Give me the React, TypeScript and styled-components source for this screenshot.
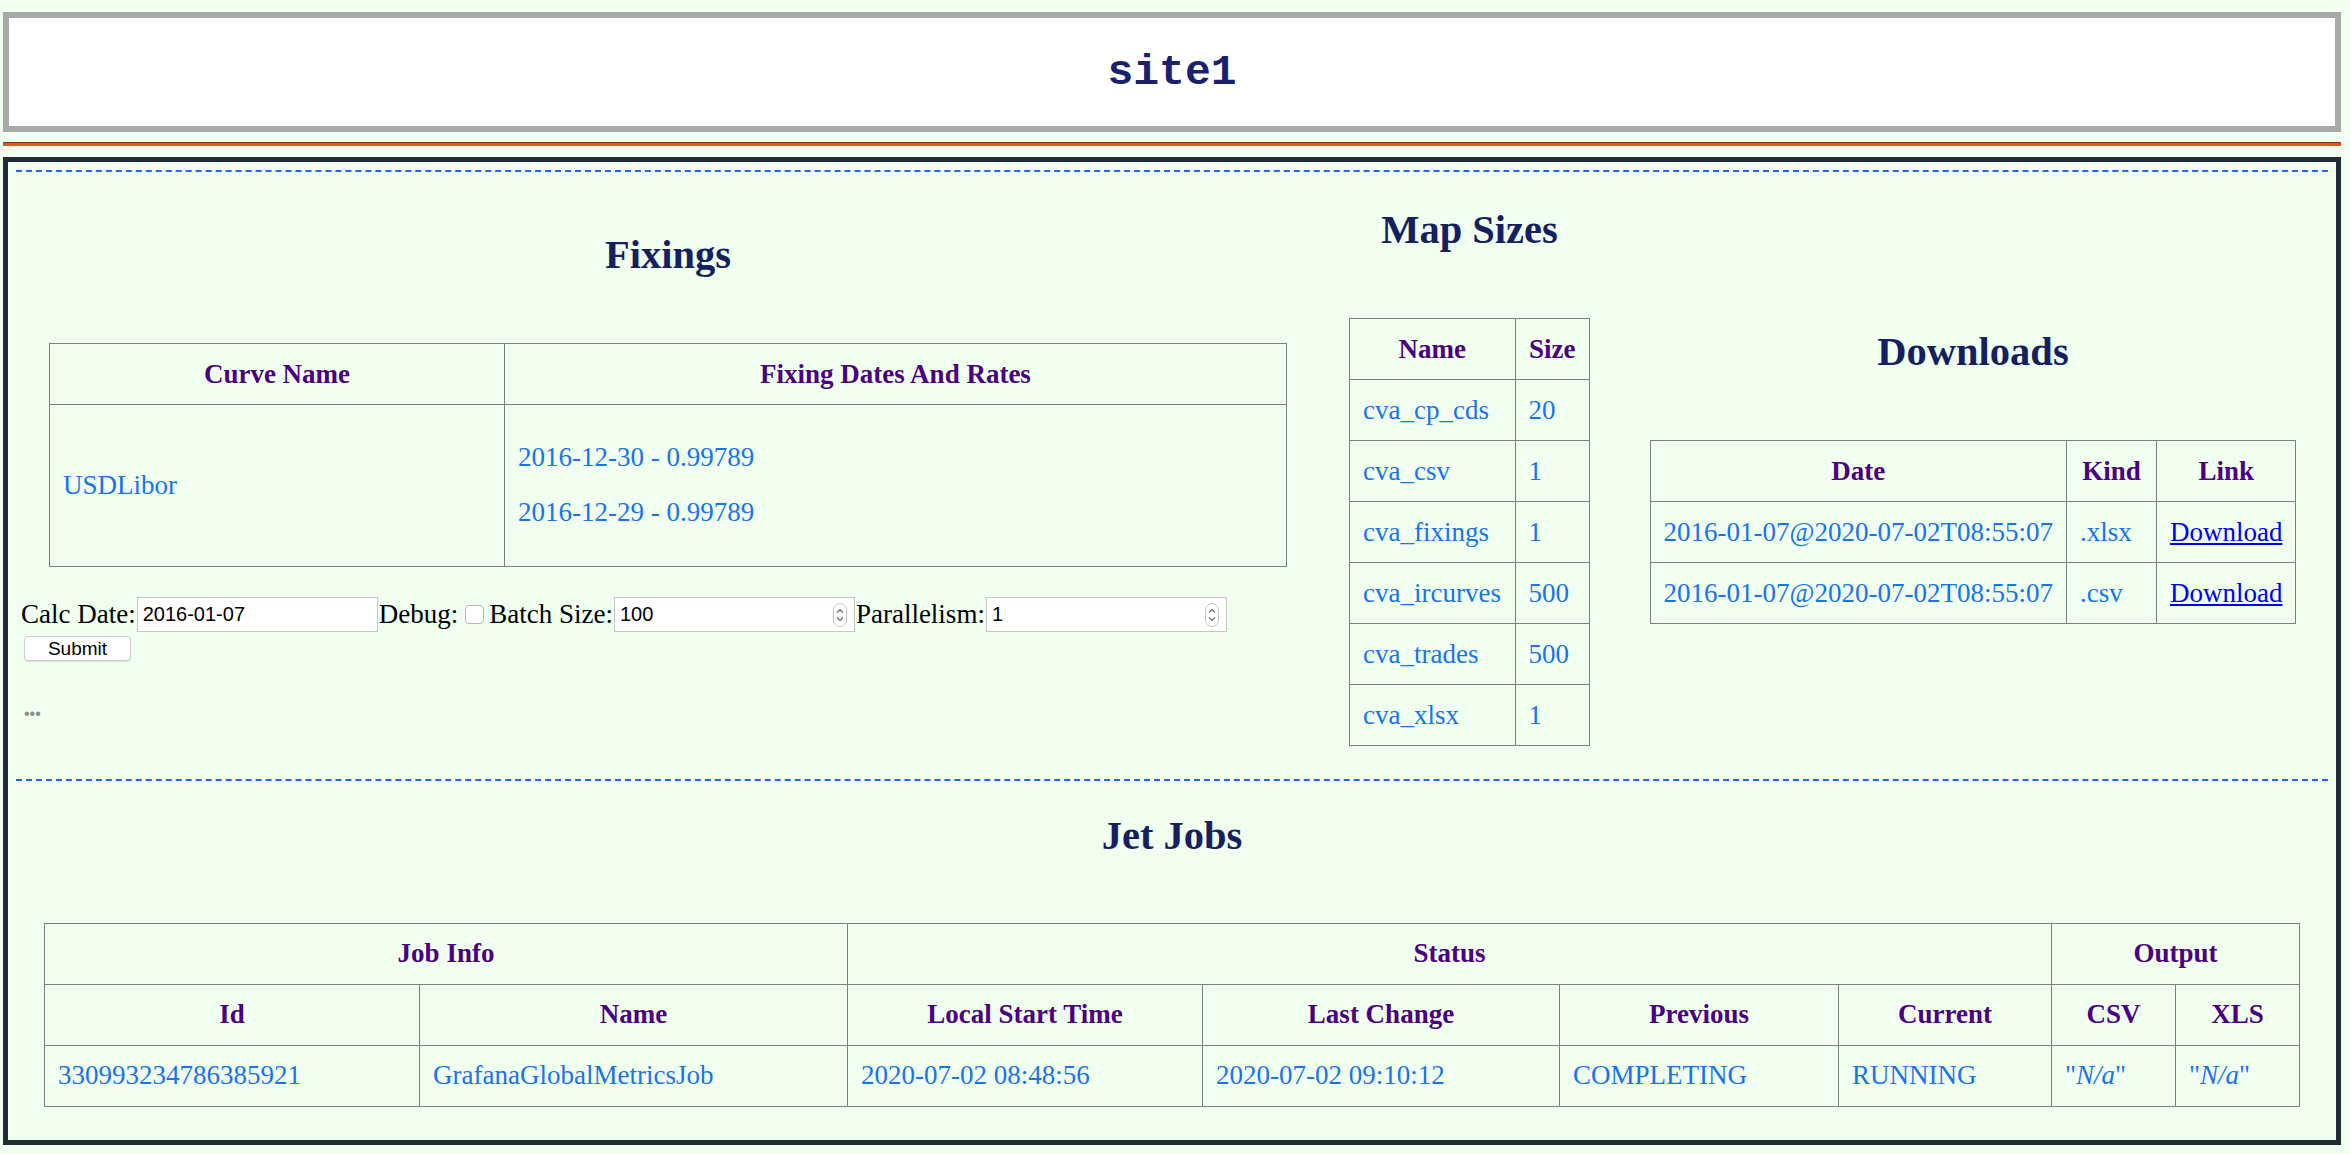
import React from 'react'
import styled, {createGlobalStyle} from 'styled-components'

const GlobalStyle = createGlobalStyle`
  html, body {
    margin: 0;
    padding: 0;
    background: #f0fff0;
  }
  body {
    font-family: "Liberation Serif", "Times New Roman", serif;
    font-size: 27px;
  }
`

const MAP_SIZES = [
    {name: 'cva_cp_cds', size: 20},
    {name: 'cva_csv', size: 1},
    {name: 'cva_fixings', size: 1},
    {name: 'cva_ircurves', size: 500},
    {name: 'cva_trades', size: 500},
    {name: 'cva_xlsx', size: 1},
]

const DOWNLOADS = [
    {date: '2016-01-07@2020-07-02T08:55:07', kind: '.xlsx'},
    {date: '2016-01-07@2020-07-02T08:55:07', kind: '.csv'},
]

const JET_COLS = [375, 428, 355, 357, 279, 213, 124, 124]

const Spinner = () => (
    <SpinIcon width="14" height="24" viewBox="0 0 14 24">
        <rect x="0.5" y="0.5" width="13" height="23" rx="6.5" fill="#fff" stroke="#c4c4c4"/>
        <path d="M4 9.5 L7 6.5 L10 9.5" fill="none" stroke="#6b6b6b" strokeWidth="1.2"/>
        <path d="M4 14.5 L7 17.5 L10 14.5" fill="none" stroke="#6b6b6b" strokeWidth="1.2"/>
    </SpinIcon>
)

export default function App() {
    return (
        <Page>
            <GlobalStyle/>
            <Header>site1</Header>
            <Rule/>
            <Main>
                <TopSection>
                    <FixingsCol>
                        <Title>Fixings</Title>
                        <Table style={{width: 1237}}>
                            <colgroup>
                                <col style={{width: 455}}/>
                                <col style={{width: 782}}/>
                            </colgroup>
                            <thead>
                            <tr>
                                <Th>Curve Name</Th>
                                <Th>Fixing Dates And Rates</Th>
                            </tr>
                            </thead>
                            <tbody>
                            <tr>
                                <Td>USDLibor</Td>
                                <Td>
                                    <Rate>2016-12-30 - 0.99789</Rate>
                                    <Rate>2016-12-29 - 0.99789</Rate>
                                </Td>
                            </tr>
                            </tbody>
                        </Table>
                        <Form>
                            <Label>Calc Date:</Label>
                            <InputBox><Input defaultValue="2016-01-07"/></InputBox>
                            <Label>Debug:</Label>
                            <Check type="checkbox"/>
                            <Label>Batch Size:</Label>
                            <InputBox><Input defaultValue="100"/><Spinner/></InputBox>
                            <Label>Parallelism:</Label>
                            <InputBox><Input defaultValue="1"/><Spinner/></InputBox>
                        </Form>
                        <SubmitRow>
                            <Submit>Submit</Submit>
                        </SubmitRow>
                        <Dots>•••</Dots>
                    </FixingsCol>

                    <MapCol>
                        <Title>Map Sizes</Title>
                        <Table>
                            <colgroup>
                                <col style={{width: 166}}/>
                                <col style={{width: 75}}/>
                            </colgroup>
                            <thead>
                            <tr>
                                <Th>Name</Th>
                                <Th>Size</Th>
                            </tr>
                            </thead>
                            <tbody>
                            {MAP_SIZES.map(item =>
                                <tr key={item.name}>
                                    <Td>{item.name}</Td>
                                    <Td>{item.size}</Td>
                                </tr>
                            )}
                            </tbody>
                        </Table>
                    </MapCol>

                    <DownloadsCol>
                        <Title>Downloads</Title>
                        <Table>
                            <colgroup>
                                <col style={{width: 416}}/>
                                <col style={{width: 90}}/>
                                <col style={{width: 137}}/>
                            </colgroup>
                            <thead>
                            <tr>
                                <Th>Date</Th>
                                <Th>Kind</Th>
                                <Th>Link</Th>
                            </tr>
                            </thead>
                            <tbody>
                            {DOWNLOADS.map(item =>
                                <tr key={item.kind}>
                                    <Td>{item.date}</Td>
                                    <Td>{item.kind}</Td>
                                    <Td><Link href="#">Download</Link></Td>
                                </tr>
                            )}
                            </tbody>
                        </Table>
                    </DownloadsCol>
                </TopSection>

                <JobsSection>
                    <Title>Jet Jobs</Title>
                    <JobsTable>
                        <colgroup>
                            {JET_COLS.map((w, i) => <col key={i} style={{width: w}}/>)}
                        </colgroup>
                        <thead>
                        <tr>
                            <Th colSpan={2}>Job Info</Th>
                            <Th colSpan={4}>Status</Th>
                            <Th colSpan={2}>Output</Th>
                        </tr>
                        <tr>
                            <Th>Id</Th>
                            <Th>Name</Th>
                            <Th>Local Start Time</Th>
                            <Th>Last Change</Th>
                            <Th>Previous</Th>
                            <Th>Current</Th>
                            <Th>CSV</Th>
                            <Th>XLS</Th>
                        </tr>
                        </thead>
                        <tbody>
                        <tr>
                            <Td>330993234786385921</Td>
                            <Td>GrafanaGlobalMetricsJob</Td>
                            <Td>2020-07-02 08:48:56</Td>
                            <Td>2020-07-02 09:10:12</Td>
                            <Td>COMPLETING</Td>
                            <Td>RUNNING</Td>
                            <Td>"<i>N/a</i>"</Td>
                            <Td>"<i>N/a</i>"</Td>
                        </tr>
                        </tbody>
                    </JobsTable>
                </JobsSection>
            </Main>
        </Page>
    )
}

const Page = styled.div`
  padding: 12px 9px 0 3px;
  min-height: 1154px;
  box-sizing: border-box;
  background: #f0fff0;
`

const Header = styled.div`
  height: 120px;
  box-sizing: border-box;
  border: 6px solid #a8a8a8;
  background: #fff;
  display: flex;
  align-items: center;
  justify-content: center;
  font-family: "Liberation Mono", "Courier New", monospace;
  font-weight: bold;
  font-size: 43px;
  color: #1a1f6e;
`

const Rule = styled.div`
  margin-top: 10px;
  height: 4px;
  box-sizing: border-box;
  border-top: 1px solid #8a2c10;
  background: #e5561e;
`

const Main = styled.div`
  margin-top: 11px;
  border: 5px solid #1e2c34;
  padding: 8px 8px 6px;
  height: 988px;
  box-sizing: border-box;
`

const TopSection = styled.div`
  border-top: 2px dashed #2b63ee;
  display: flex;
  align-items: center;
  padding: 3px 4px 3px 5px;
`

const Column = styled.div`
  display: flex;
  flex-direction: column;
`

const FixingsCol = styled(Column)`
  width: 1294px;
  flex: none;
`

const MapCol = styled(Column)`
  margin-left: 34px;
  width: 241px;
  flex: none;
`

const DownloadsCol = styled(Column)`
  margin-left: 32px;
  flex: 1;
  align-items: center;
`

const Title = styled.h2`
  margin: 32px 0;
  font-size: 40.5px;
  line-height: 46px;
  font-weight: bold;
  color: #161f5f;
  text-align: center;
`

const Table = styled.table`
  border-collapse: collapse;
  table-layout: fixed;
  margin: 33px auto 30px;
`

const JobsTable = styled(Table)`
  width: calc(100% - 56px);
  margin: 31.5px 28px 30px;
`

const Th = styled.th`
  border: 1px solid #7f7f7f;
  padding: 14.5px 13px;
  line-height: 31px;
  color: #4b0082;
  font-weight: bold;
  text-align: center;
  white-space: nowrap;
`

const Td = styled.td`
  border: 1px solid #7f7f7f;
  padding: 14.5px 13px;
  line-height: 31px;
  color: #1a73e8;
  text-align: left;
  vertical-align: middle;
  white-space: nowrap;
`

const Rate = styled.p`
  margin: 22px 0 24px;
`

const Link = styled.a`
  color: #0000ee;
  text-decoration: underline;
`

const Form = styled.div`
  display: flex;
  align-items: center;
  height: 35px;
  margin-top: 0;
`

const Label = styled.span`
  color: #000;
  white-space: nowrap;
  line-height: 31px;
`

const InputBox = styled.div`
  display: flex;
  align-items: center;
  width: 241px;
  height: 35px;
  box-sizing: border-box;
  border: 1px solid #c6c6c6;
  background: #fff;
  margin: 0 1px;
`

const Input = styled.input`
  flex: 1;
  min-width: 0;
  border: none;
  outline: none;
  background: transparent;
  padding: 0 5px;
  font-family: "Liberation Sans", Arial, sans-serif;
  font-size: 20px;
  color: #000;
`

const SpinIcon = styled.svg`
  flex: none;
  margin-right: 7px;
`

const Check = styled.input`
  appearance: none;
  width: 19px;
  height: 19px;
  margin: 0 5px 0 7px;
  border: 1px solid #b5b5b5;
  border-radius: 4px;
  background: #fff;
`

const SubmitRow = styled.div`
  display: flex;
  margin-top: 4px;
`

const Submit = styled.button`
  width: 107px;
  height: 25px;
  margin-left: 3px;
  padding: 0;
  background: #fff;
  border: 1px solid #cfcfcf;
  border-radius: 4px;
  box-shadow: 0 1px 1px rgba(0, 0, 0, 0.12);
  font-family: "Liberation Sans", Arial, sans-serif;
  font-size: 19px;
  color: #000;
`

const Dots = styled.p`
  margin: 43px 0 27px 3px;
  font-family: "Liberation Sans", Arial, sans-serif;
  font-size: 16px;
  line-height: 20px;
  color: #8a8a8a;
`

const JobsSection = styled.div`
  border-top: 2px dashed #2b63ee;
  display: flex;
  flex-direction: column;
`
